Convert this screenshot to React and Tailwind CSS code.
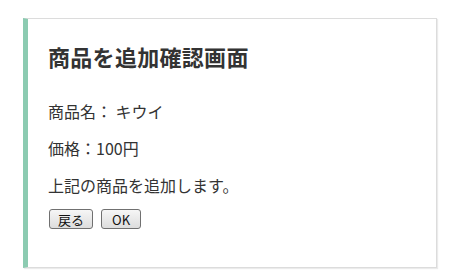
import React from "react";

const font = { fontFamily: '"Noto Sans CJK JP", "Noto Sans", sans-serif' };

const Button = ({ children }) => (
  <button className="h-[20px] px-[8px] text-[13px] leading-none text-[#111] border border-[#707070] rounded-[3px] bg-gradient-to-b from-[#f6f6f6] to-[#dddddd]">
    {children}
  </button>
);

export default function App() {
  return (
    <div className="w-[459px] h-[278px] bg-white pt-[18px] pl-[23px]" style={font}>
      {/* Card */}
      <div className="w-[414px] h-[250px] border border-[#dcdcdc] border-l-[5px] border-l-[#8ccbb1] shadow-[1px_1px_1px_rgba(0,0,0,0.08)] pl-[20px] pt-[24px] text-[#333]">
        <h2 className="text-[22px] font-bold leading-[26px] tracking-[0.3px] text-[#333]">
          商品を追加確認画面
        </h2>
        <div className="mt-[31px] flex flex-col gap-[15px] text-[16px] leading-[22px]">
          <p>商品名： キウイ</p>
          <p>価格：100円</p>
          <p>上記の商品を追加します。</p>
        </div>
        <div className="mt-[13px] ml-[1px] flex gap-[8px]">
          <Button>戻る</Button>
          <Button>
            <span className="px-[2px]">OK</span>
          </Button>
        </div>
      </div>
    </div>
  );
}
